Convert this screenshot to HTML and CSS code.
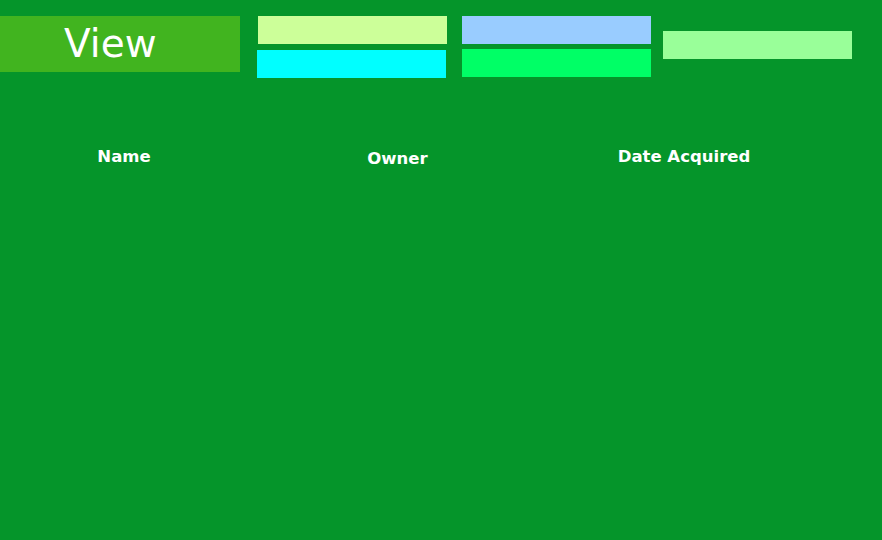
FILE: index.html
```html
<!DOCTYPE html>
<html>
<head>
<meta charset="utf-8">
<link rel="stylesheet" href="styles.css">
</head>
<body>
<div class="page">
  <header class="toolbar">
    <div class="title">View</div>
    <div class="group g1">
      <div class="bar lime shift"></div>
      <div class="bar cyan"></div>
    </div>
    <div class="group g2">
      <div class="bar blue"></div>
      <div class="bar green"></div>
    </div>
    <div class="group g3">
      <div class="bar mint"></div>
    </div>
  </header>
  <div class="columns">
    <div class="col">Name</div>
    <div class="col low">Owner</div>
    <div class="col">Date Acquired</div>
  </div>
</div>
</body>
</html>
```

FILE: styles.css
```css
html, body {
  margin: 0;
  padding: 0;
  height: 100%;
}
body {
  background: #05952a;
  font-family: "DejaVu Sans", Verdana, sans-serif;
  color: #ffffff;
}
.page {
  width: 882px;
  height: 540px;
  overflow: hidden;
}
.toolbar {
  display: flex;
  align-items: flex-start;
  padding-top: 16px;
}
.title {
  width: 240px;
  height: 56px;
  background: #41b41f;
  font-size: 39px;
  line-height: 56px;
  padding-left: 64px;
  box-sizing: border-box;
}
.group {
  display: flex;
  flex-direction: column;
}
.g1 {
  margin-left: 17px;
  gap: 6px;
}
.g2 {
  margin-left: 15px;
  gap: 5px;
}
.g3 {
  margin-left: 12px;
  padding-top: 15px;
}
.bar {
  width: 189px;
  height: 28px;
}
.shift { margin-left: 1px; }
.lime { background: #ccff99; }
.cyan { background: #00ffff; }
.blue { background: #99ccff; }
.green { background: #00ff66; }
.mint { background: #99ff99; }

.columns {
  display: grid;
  grid-template-columns: 248px 299px 274px;
  padding-top: 69px;
}
.col {
  text-align: center;
  font-weight: bold;
  font-size: 16.5px;
  line-height: 20px;
}
.low {
  padding-top: 2px;
}
```
